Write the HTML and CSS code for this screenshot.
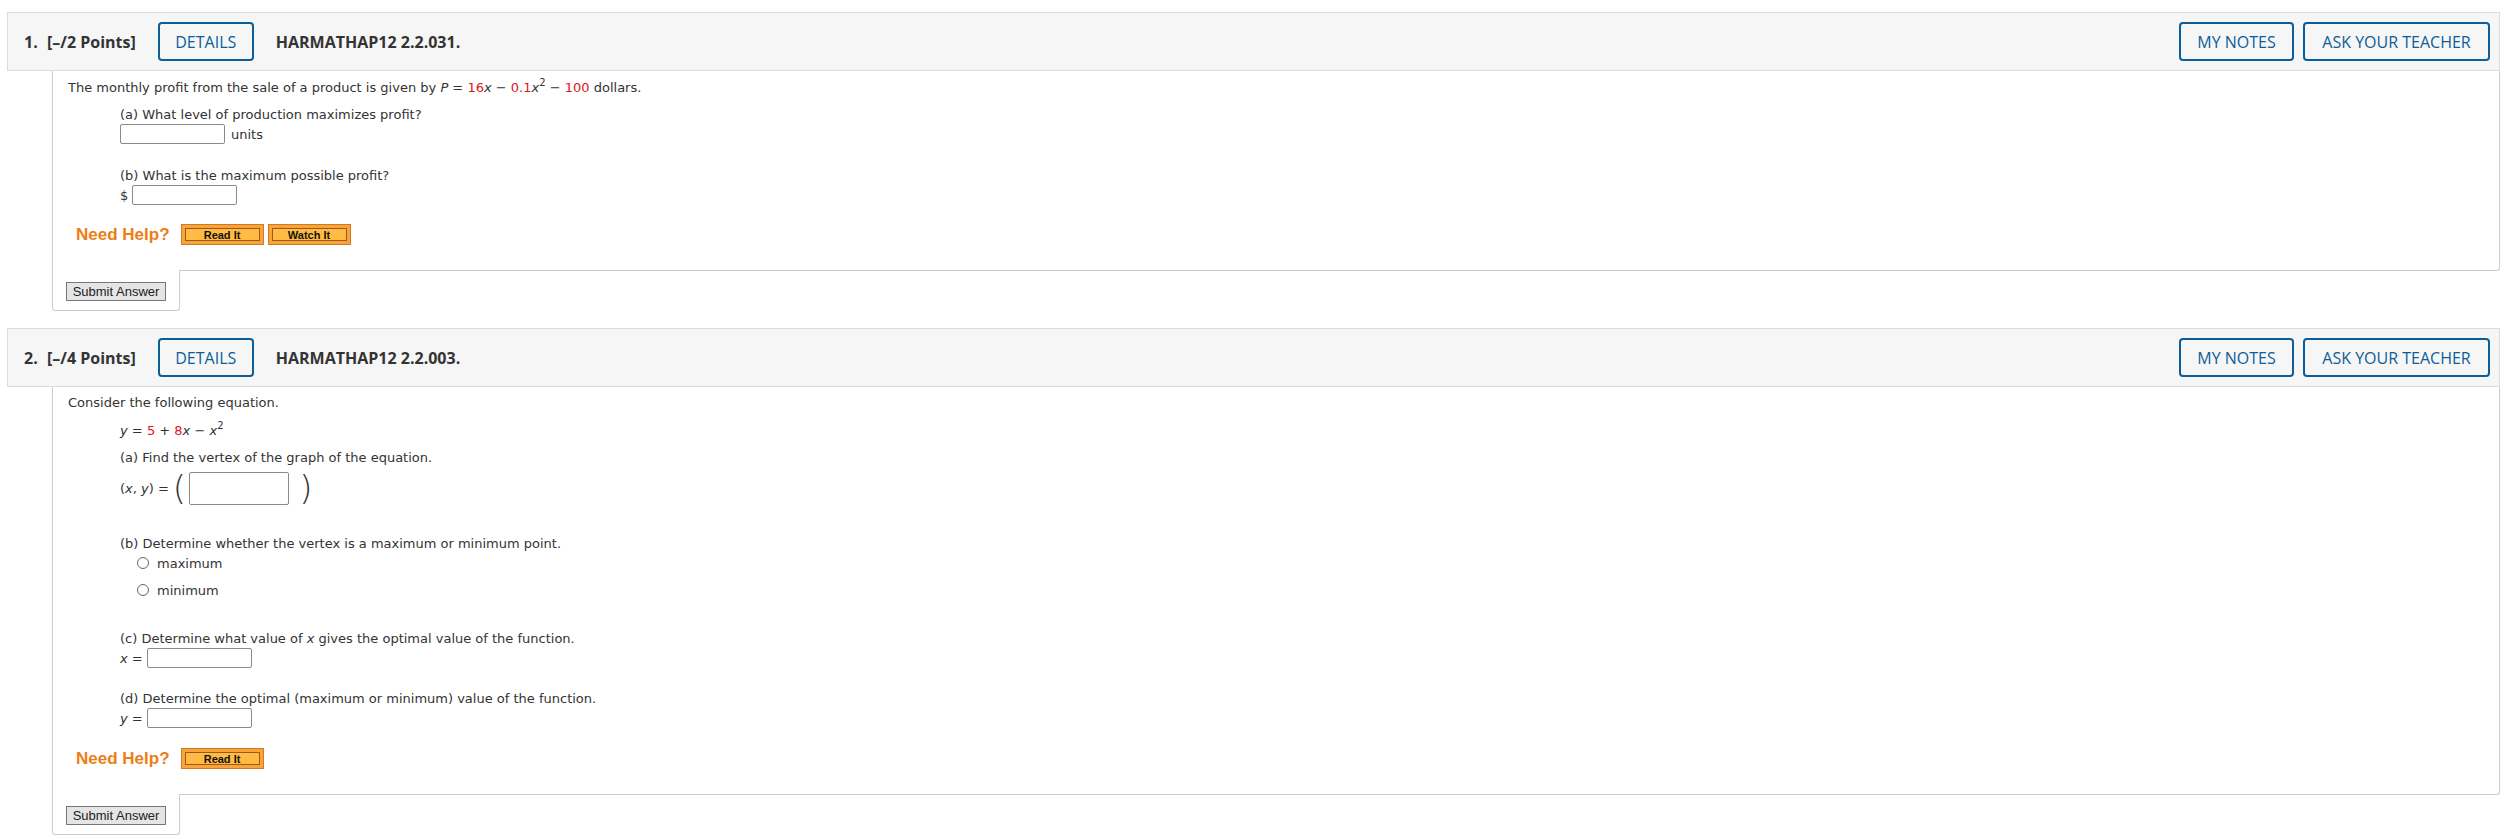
FILE: index.html
```html
<!DOCTYPE html>
<html>
<head>
<meta charset="utf-8">
<link rel="stylesheet" href="styles.css">
</head>
<body>
<div class="page">

  <div class="question">
    <div class="qhead">
      <span class="qnum">1.</span>
      <span class="qpts">[–/2 Points]</span>
      <button class="btn-outline w-details">DETAILS</button>
      <span class="qcode">HARMATHAP12 2.2.031.</span>
      <span class="spacer"></span>
      <button class="btn-outline w-notes">MY NOTES</button>
      <button class="btn-outline w-ask">ASK YOUR TEACHER</button>
    </div>
    <div class="qbody q1">
      <div class="line">The monthly profit from the sale of a product is given by <i>P</i> = <span class="red">16</span><i>x</i> − <span class="red">0.1</span><i>x</i><sup>2</sup> − <span class="red">100</span> dollars.</div>
      <div class="part">
        <div class="line mt9">(a) What level of production maximizes profit?</div>
        <div class="ansrow"><span class="ans"></span><span class="unit">units</span></div>
        <div class="line mt23">(b) What is the maximum possible profit?</div>
        <div class="ansrow"><span class="pre">$</span><span class="ans"></span></div>
      </div>
      <div class="help mt19">
        <span class="needhelp">Need Help?</span>
        <span class="hbtn"><span class="hin">Read It</span></span>
        <span class="hbtn"><span class="hin">Watch It</span></span>
      </div>
    </div>
    <div class="tab"><button class="submit">Submit Answer</button></div>
  </div>

  <div class="question q2">
    <div class="qhead">
      <span class="qnum">2.</span>
      <span class="qpts">[–/4 Points]</span>
      <button class="btn-outline w-details">DETAILS</button>
      <span class="qcode">HARMATHAP12 2.2.003.</span>
      <span class="spacer"></span>
      <button class="btn-outline w-notes">MY NOTES</button>
      <button class="btn-outline w-ask">ASK YOUR TEACHER</button>
    </div>
    <div class="qbody q2b">
      <div class="line">Consider the following equation.</div>
      <div class="part">
        <div class="line mt10"><i>y</i> = <span class="red">5</span> + <span class="red">8</span><i>x</i> − <i>x</i><sup>2</sup></div>
        <div class="line mt9">(a) Find the vertex of the graph of the equation.</div>
        <div class="vrow mt5">
          <span class="pre">(<i>x</i>, <i>y</i>) =</span>
          <span class="paren">(</span><span class="ans big"></span><span class="paren">)</span>
        </div>
        <div class="line mt30">(b) Determine whether the vertex is a maximum or minimum point.</div>
        <div class="radio mt1"><span class="circ"></span>maximum</div>
        <div class="radio mt9"><span class="circ"></span>minimum</div>
        <div class="line mt31">(c) Determine what value of <i>x</i> gives the optimal value of the function.</div>
        <div class="ansrow"><span class="pre"><i>x</i> =</span><span class="ans"></span></div>
        <div class="line mt22">(d) Determine the optimal (maximum or minimum) value of the function.</div>
        <div class="ansrow"><span class="pre"><i>y</i> =</span><span class="ans"></span></div>
      </div>
      <div class="help mt20">
        <span class="needhelp">Need Help?</span>
        <span class="hbtn"><span class="hin">Read It</span></span>
      </div>
    </div>
    <div class="tab"><button class="submit">Submit Answer</button></div>
  </div>

</div>
</body>
</html>
```

FILE: styles.css
```css
html, body {
  margin: 0;
  padding: 0;
  background: #ffffff;
}
.page {
  padding: 12px 0 0 7px;
  width: 2493px;
}
.question {
  display: flex;
  flex-direction: column;
}
.q2 {
  margin-top: 17px;
}
.qhead {
  display: flex;
  align-items: center;
  height: 39px;
  padding: 9px 9px 9px 16px;
  background: #f6f6f6;
  border: 1px solid #dcdcdc;
  font-family: "Open Sans", "Noto Sans", sans-serif;
  font-size: 16px;
  color: #333333;
}
.qnum {
  font-weight: 700;
  width: 23px;
}
.qpts {
  font-weight: 700;
  margin-right: 22px;
}
.qcode {
  font-weight: 700;
  margin-left: 22px;
}
.spacer {
  flex: 1;
}
.btn-outline {
  height: 39px;
  box-sizing: border-box;
  border: 2px solid #0b5e99;
  border-radius: 4px;
  background: transparent;
  color: #0b5e99;
  font-family: "Open Sans", "Noto Sans", sans-serif;
  font-size: 16px;
  font-weight: 500;
  padding: 0;
  margin-left: 9px;
  text-align: center;
}
.qhead .btn-outline:first-of-type {
  margin-left: 0;
}
.w-details { width: 96px; }
.w-notes { width: 115px; }
.w-ask { width: 187px; }
.qbody {
  margin-left: 45px;
  border: 1px solid #cccccc;
  border-top: none;
  border-bottom-right-radius: 3px;
  padding: 8px 14px 25px 15px;
  font-family: "DejaVu Sans", Verdana, sans-serif;
  font-size: 13px;
  color: #333333;
}
.q2b {
  padding-top: 7px;
}
.line {
  height: 18px;
  line-height: 18px;
  white-space: nowrap;
}
.line i, .pre i {
  font-style: italic;
}
sup {
  font-size: 10px;
  line-height: 0;
  vertical-align: 6px;
}
.red {
  color: #e0141e;
}
.part {
  padding-left: 52px;
}
.mt1 { margin-top: 1px; }
.mt5 { margin-top: 5px; }
.mt9 { margin-top: 9px; }
.mt10 { margin-top: 10px; }
.mt19 { margin-top: 19px; }
.mt20 { margin-top: 20px; }
.mt22 { margin-top: 22px; }
.mt23 { margin-top: 23px; }
.mt30 { margin-top: 30px; }
.mt31 { margin-top: 31px; }
.ansrow {
  display: flex;
  align-items: center;
  height: 20px;
}
.ans {
  display: inline-block;
  box-sizing: border-box;
  width: 105px;
  height: 20px;
  border: 1px solid #8a8a8a;
  border-radius: 2px;
  background: #ffffff;
}
.ans.big {
  width: 100px;
  height: 33px;
}
.unit {
  margin-left: 6px;
}
.pre {
  margin-right: 4px;
}
.vrow {
  display: flex;
  align-items: center;
  height: 33px;
}
.paren {
  font-family: "DejaVu Sans", sans-serif;
  font-weight: 200;
  font-size: 34px;
  line-height: 33px;
  color: #333333;
  margin: 0 3px 0 0;
}
.paren + .ans + .paren {
  margin: 0 0 0 10px;
}
.radio {
  display: flex;
  align-items: center;
  height: 18px;
  padding-left: 17px;
}
.circ {
  display: inline-block;
  box-sizing: border-box;
  width: 12px;
  height: 12px;
  border: 1px solid #666666;
  border-radius: 50%;
  margin-right: 8px;
}
.help {
  display: flex;
  align-items: center;
  padding-left: 8px;
  height: 21px;
}
.needhelp {
  font-family: "Liberation Sans", Arial, sans-serif;
  font-weight: 700;
  font-size: 17px;
  color: #ee7d14;
  margin-right: 11px;
}
.hbtn {
  display: flex;
  box-sizing: border-box;
  width: 83px;
  height: 21px;
  padding: 3px;
  background: #f9a33a;
  border: 1px solid #d07a24;
  margin-right: 4px;
}
.hin {
  flex: 1;
  display: flex;
  align-items: center;
  justify-content: center;
  border: 1px solid #9b5a16;
  background: #ffbb44;
  font-family: "Liberation Sans", Arial, sans-serif;
  font-weight: 700;
  font-size: 11px;
  color: #111111;
}
.tab {
  align-self: flex-start;
  margin-left: 45px;
  margin-top: -1px;
  width: 128px;
  box-sizing: border-box;
  padding: 12px 0 9px 13px;
  background: #ffffff;
  border: 1px solid #cccccc;
  border-top: none;
  border-radius: 0 0 3px 3px;
}
.submit {
  display: block;
  width: 100px;
  height: 19px;
  padding: 0;
  box-sizing: border-box;
  background: #e5e5e5;
  border: 1px solid #767676;
  border-radius: 0;
  font-family: "Liberation Sans", Arial, sans-serif;
  font-size: 13px;
  color: #222222;
}
```
